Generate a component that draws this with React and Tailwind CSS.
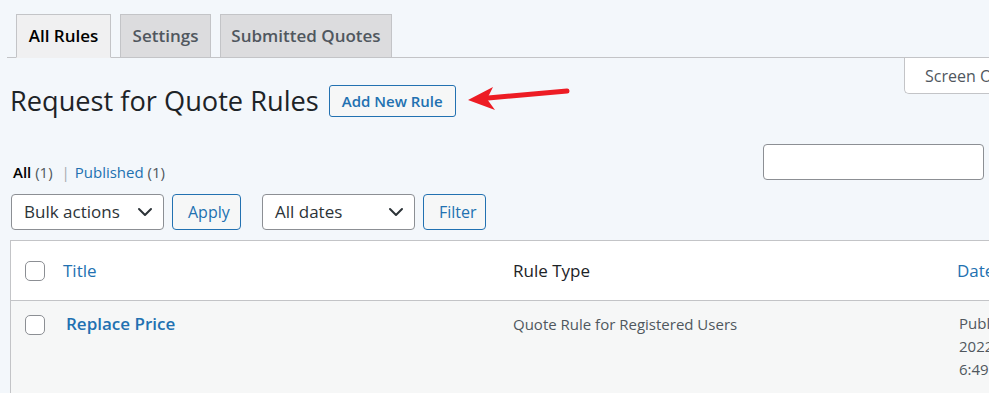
import React from "react";

const font = { fontFamily: "'Open Sans', 'Noto Sans', sans-serif" };

function Chevron() {
  return (
    <svg width="16" height="10" viewBox="0 0 16 10" className="shrink-0">
      <path d="M2 2 L8 8 L14 2" fill="none" stroke="#2c3338" strokeWidth="2" strokeLinecap="round" strokeLinejoin="round" />
    </svg>
  );
}

function Select({ label, width }) {
  return (
    <div className={`flex items-center justify-between h-9 pl-3 pr-[10px] bg-white border border-[#8c8f94] rounded-[4px] text-[17px] text-[#2c3338] ${width}`}>
      <span>{label}</span>
      <Chevron />
    </div>
  );
}

function Button({ children, className = "" }) {
  return (
    <button className={`h-9 px-[15px] bg-[#f6f7f7] border border-[#2271b1] rounded-[4px] text-[16px] text-[#2271b1] ${className}`}>
      {children}
    </button>
  );
}

function Checkbox() {
  return <span className="block w-5 h-5 bg-white border border-[#8c8f94] rounded-[5px]" />;
}

export default function App() {
  const tabs = [
    { label: "All Rules", w: "w-[95px]", active: true },
    { label: "Settings", w: "w-[91px]" },
    { label: "Submitted Quotes", w: "w-[172px]" },
  ];

  return (
    <div className="relative w-[989px] h-[393px] overflow-hidden bg-[#f3f7fb]" style={font}>
      {/* Tabs */}
      <div className="ml-[7px] pt-[14px] pl-[9px] flex gap-[9px] border-b border-[#c3c4c7]">
        {tabs.map((t) => (
          <div key={t.label}
            className={`${t.w} h-[44px] -mb-px flex items-center justify-center border border-[#c3c4c7] text-[17px] font-semibold ${
              t.active ? "bg-[#f0f0f1] text-[#000] border-b-[#f0f0f1]" : "bg-[#dcdcde] text-[#50575e]"
            }`}>
            {t.label}
          </div>
        ))}
      </div>

      {/* Title row + Screen Options */}
      <div className="flex justify-between items-start">
        <div className="flex items-center pl-[10px] pt-[27px]">
          <h1 className="text-[27.2px] text-[#1d2327] leading-[32px]">Request for Quote Rules</h1>
          <button className="ml-[10px] h-8 px-[12px] bg-[#f6f7f7] border border-[#2271b1] rounded-[3px] text-[15px] font-semibold text-[#2271b1]">
            Add New Rule
          </button>
        </div>
        <div className="w-[85px] h-9 pl-5 flex items-center bg-white border border-t-0 border-r-0 border-[#c3c4c7] rounded-bl-[5px] text-[16px] text-[#50575e] whitespace-nowrap overflow-hidden">
          Screen Options
        </div>
      </div>

      {/* Views + search */}
      <div className="flex justify-between items-start h-[77px]">
        <div className="pl-[13px] pt-[45px] text-[15px] leading-5 text-[#50575e]">
          <span className="font-semibold text-black">All</span> (1) <span className="mx-[5px] text-[#a7aaad]">|</span>
          <span className="text-[#2271b1]">Published</span> (1)
        </div>
        <div className="mt-[27px] mr-[5px] w-[221px] h-9 bg-white border border-[#8c8f94] rounded-[4px]" />
      </div>

      {/* Tablenav */}
      <div className="flex items-center pl-[11px] h-9">
        <Select label="Bulk actions" width="w-[153px]" />
        <Button className="ml-2 w-[69px]">Apply</Button>
        <Select label="All dates" width="ml-[21px] w-[153px]" />
        <Button className="ml-2 w-[63px]">Filter</Button>
      </div>

      {/* Table */}
      <div className="mt-[10px] ml-[10px] border-l border-t border-[#c3c4c7]">
        <div className="flex items-center h-[60px] bg-white border-b border-[#c3c4c7] text-[17px]">
          <div className="w-[52px] shrink-0 pl-[14px]"><Checkbox /></div>
          <div className="w-[450px] shrink-0 text-[#2271b1]">Title</div>
          <div className="w-[444px] shrink-0 text-[#1d2327]">Rule Type</div>
          <div className="shrink-0 text-[#2271b1] whitespace-nowrap">Date</div>
        </div>
        <div className="flex items-start h-[100px] bg-[#f6f7f7] pt-[11px]">
          <div className="w-[52px] shrink-0 pl-[14px] pt-[3px]"><Checkbox /></div>
          <div className="w-[450px] shrink-0 pl-[3px] text-[17px] font-semibold text-[#2271b1] leading-6">Replace Price</div>
          <div className="w-[444px] shrink-0 text-[15px] text-[#50575e] leading-6">Quote Rule for Registered Users</div>
          <div className="shrink-0 pl-[2px] text-[15px] text-[#50575e] leading-[23px] whitespace-nowrap">
            <div>Published</div>
            <div>2022/05/10 at</div>
            <div>6:49 am</div>
          </div>
        </div>
      </div>

      {/* Annotation arrow */}
      <svg className="absolute left-[460px] top-[82px] pointer-events-none" width="115" height="34" viewBox="0 0 115 34">
        <line x1="28" y1="16" x2="107" y2="9" stroke="#ed1c24" strokeWidth="5" strokeLinecap="round" />
        <polygon points="8,18 33,5 27,17 35,28" fill="#ed1c24" />
      </svg>
    </div>
  );
}
